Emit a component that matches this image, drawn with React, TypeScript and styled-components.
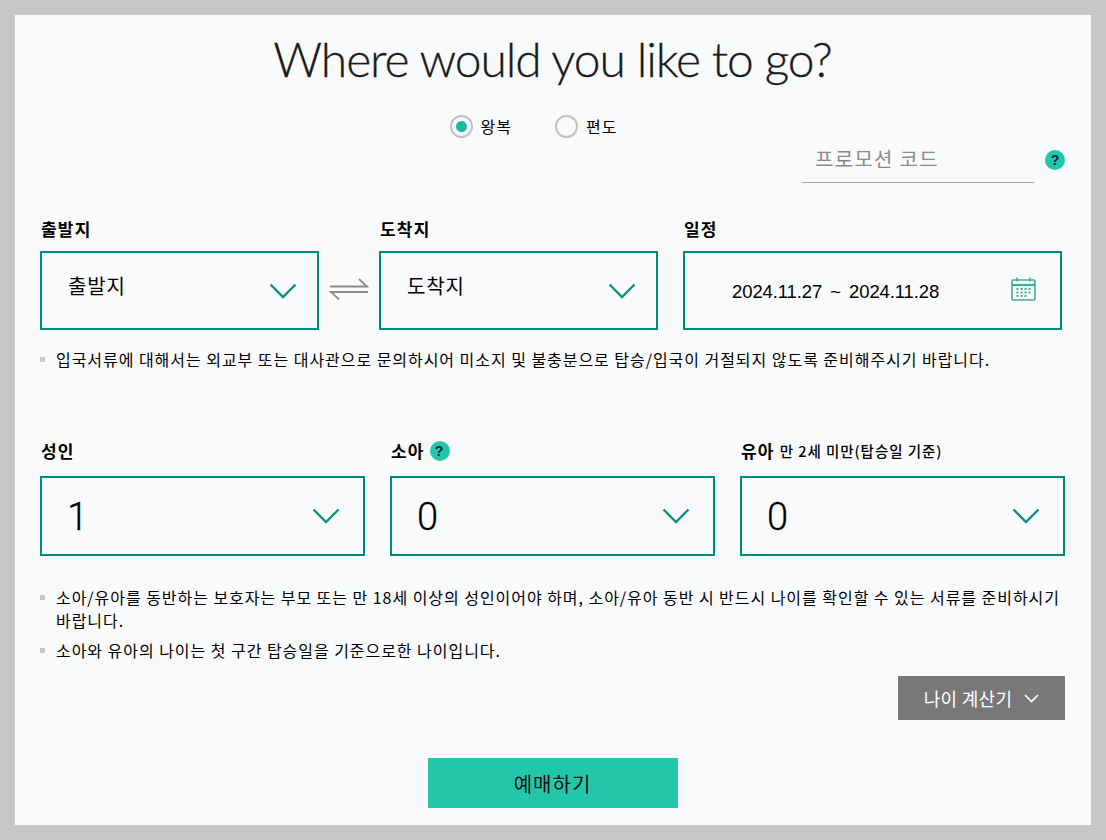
import React from "react";
import styled, { createGlobalStyle } from "styled-components";

const Global = createGlobalStyle`
  html, body { margin: 0; padding: 0; background: #c5c6c8; }
  body { font-family: "Noto Sans CJK KR", "Noto Sans", sans-serif; color: #000; }
  * { box-sizing: border-box; }
`;
const Page = styled.div`
  padding: 15px;
  width: 1106px;
  height: 840px;
`;
const Panel = styled.main`
  background: #f8fafc;
  height: 810px;
  padding: 0 26px 0 25px;
  display: flex;
  flex-direction: column;
`;
const Title = styled.h1`
  margin: 13px 0 0;
  height: 62px;
  font: 300 48px/62px Lato, sans-serif;
  letter-spacing: -1.1px;
  -webkit-text-stroke: 0.3px #1a1a1a;
  color: #1a1a1a;
  text-align: center;
`;
const RadioRow = styled.div`
  display: flex;
  justify-content: center;
  gap: 43px;
  margin-top: 24px;
  height: 24px;
  padding-right: 38px;
`;
const RadioLabel = styled.label`
  display: flex;
  align-items: center;
  gap: 8px;
  font-size: 16px;
  letter-spacing: 1px;
`;
const RadioMark = styled.span<{ $on?: boolean }>`
  width: 23px;
  height: 23px;
  border-radius: 50%;
  border: 2px solid #c2c2c2;
  display: flex;
  align-items: center;
  justify-content: center;
  &::after {
    content: "";
    width: 11px;
    height: 11px;
    border-radius: 50%;
    background: ${(p) => (p.$on ? "#1cb99b" : "transparent")};
  }
`;
const PromoRow = styled.div`
  display: flex;
  justify-content: flex-end;
  align-items: flex-start;
  gap: 11px;
  margin-top: 3px;
`;
const PromoField = styled.div`
  width: 232px;
  height: 42px;
  border-bottom: 1px solid #aaa;
  padding: 2px 0 0 13px;
  font-size: 20px;
  line-height: 32px;
  letter-spacing: 1.3px;
  color: #8a8a8a;
`;
const HelpBadge = styled.span<{ $small?: boolean }>`
  display: inline-flex;
  width: 20px;
  height: 20px;
  margin-top: ${(p) => (p.$small ? 1 : 9)}px;
  border-radius: 50%;
  background: #22c7a9;
  color: #123;
  font: 700 14px/20px "Liberation Sans", sans-serif;
  align-items: center;
  justify-content: center;
  flex: none;
`;
const RouteRow = styled.div`
  display: flex;
  align-items: flex-end;
  margin-top: 33px;
`;
const Field = styled.div<{ $w: number; $gap?: number }>`
  width: ${(p) => p.$w}px;
  margin-left: ${(p) => p.$gap ?? 0}px;
  flex: none;
  display: flex;
  flex-direction: column;
`;
const FieldLabel = styled.div`
  height: 25px;
  padding-left: 1px;
  font-size: 17px;
  font-weight: 700;
  letter-spacing: 1.2px;
  line-height: 24px;
  display: flex;
  align-items: center;
  gap: 5px;
  white-space: nowrap;
`;
const SubLabel = styled.span`
  font-size: 14.5px;
  font-weight: 500;
  letter-spacing: 0.95px;
`;
const SelectBox = styled.div<{ $h: number }>`
  height: ${(p) => p.$h}px;
  margin-top: ${(p) => (p.$h === 79 ? 10 : 13)}px;
  border: 2px solid #008c7a;
  display: flex;
  align-items: center;
  justify-content: space-between;
`;
const PlaceText = styled.span`
  padding-left: 26px;
  margin-top: -11px;
  font-size: 20px;
  letter-spacing: 0.9px;
`;
const CountText = styled.span`
  padding-left: 25px;
  font: 300 38px/44px Roboto, "Noto Sans", sans-serif;
  -webkit-text-stroke: 0.3px #000;
  margin-top: 2px;
`;
const DateText = styled.span`
  padding-left: 47px;
  margin-top: 3px;
  font: 400 18.5px/24px "Liberation Sans", sans-serif;
  letter-spacing: -0.1px;
  word-spacing: 3px;
`;
const Swap = styled.div`
  width: 60px;
  height: 79px;
  flex: none;
  display: flex;
  align-items: center;
  justify-content: center;
  padding-bottom: 4px;
`;
const Chevron = styled.svg<{ $end: number }>`
  margin-right: ${(p) => p.$end}px;
  flex: none;
`;
const CalIcon = styled.svg`
  margin: -3px 24px 0 0;
  flex: none;
`;
const Notes = styled.ul<{ $top: number }>`
  list-style: none;
  margin: ${(p) => p.$top}px 0 0;
  padding: 0;
  font-size: 16px;
  line-height: 23px;
`;
const Note = styled.li`
  position: relative;
  padding-left: 16px;
  margin-bottom: 7px;
  letter-spacing: 0.96px;
  &::before {
    content: "";
    position: absolute;
    left: 0;
    top: 9px;
    width: 5px;
    height: 5px;
    background: #c8c8c8;
  }
`;
const PaxRow = styled.div`
  display: flex;
  gap: 25px;
  margin-top: 60px;
`;
const CalcRow = styled.div`
  display: flex;
  justify-content: flex-end;
  margin-top: 7px;
`;
const CalcButton = styled.button`
  width: 167px;
  height: 44px;
  border: 0;
  background: #787878;
  color: #fff;
  font: 400 18px "Noto Sans CJK KR", sans-serif;
  letter-spacing: 0.3px;
  display: flex;
  align-items: center;
  justify-content: center;
  gap: 12px;
`;
const SubmitRow = styled.div`
  display: flex;
  justify-content: center;
  margin-top: 38px;
`;
const Submit = styled.button`
  width: 250px;
  height: 50px;
  border: 0;
  background: #22c7a9;
  color: #111;
  font: 400 20px "Noto Sans CJK KR", sans-serif;
  letter-spacing: 1px;
`;

const Down = ({ end = 20 }: { end?: number }) => (
  <Chevron $end={end} width={28} height={16} viewBox="0 0 28 16" fill="none">
    <path d="M1.5 1.5 14 14 26.5 1.5" stroke="#0f8f80" strokeWidth="2.4" />
  </Chevron>
);

export default function App() {
  return (
    <Page>
      <Global />
      <Panel>
        <Title>Where would you like to go?</Title>
        <RadioRow>
          <RadioLabel><RadioMark $on />왕복</RadioLabel>
          <RadioLabel><RadioMark />편도</RadioLabel>
        </RadioRow>
        <PromoRow>
          <PromoField>프로모션 코드</PromoField>
          <HelpBadge>?</HelpBadge>
        </PromoRow>
        <RouteRow>
          <Field $w={279}>
            <FieldLabel>출발지</FieldLabel>
            <SelectBox $h={79}><PlaceText>출발지</PlaceText><Down /></SelectBox>
          </Field>
          <Swap>
            <svg width="40" height="22" viewBox="0 0 40 22" fill="none" stroke="#8a8a8a" strokeWidth="1.8">
              <path d="M1 8.5h37L30 1" />
              <path d="M39 14H2l8 7.5" />
            </svg>
          </Swap>
          <Field $w={279}>
            <FieldLabel>도착지</FieldLabel>
            <SelectBox $h={79}><PlaceText>도착지</PlaceText><Down /></SelectBox>
          </Field>
          <Field $w={379} $gap={25}>
            <FieldLabel>일정</FieldLabel>
            <SelectBox $h={79}>
              <DateText>2024.11.27 ~ 2024.11.28</DateText>
              <CalIcon width="25" height="24" viewBox="0 0 25 24" fill="none" stroke="#48a999" strokeWidth="1.6">
                <rect x="1" y="3" width="23" height="20" rx="1.5" />
                <path d="M1 8h23" strokeWidth="2.2" />
                <path d="M6 0.5v4M19 0.5v4" />
                <path d="M5.5 12h2M9.5 12h2M13.5 12h2M17.5 12h2M5.5 15.5h2M9.5 15.5h2M13.5 15.5h2M17.5 15.5h2M5.5 19h2M9.5 19h2M13.5 19h2" strokeWidth="2" />
              </CalIcon>
            </SelectBox>
          </Field>
        </RouteRow>
        <Notes $top={18}>
          <Note>입국서류에 대해서는 외교부 또는 대사관으로 문의하시어 미소지 및 불충분으로 탑승/입국이 거절되지 않도록 준비해주시기 바랍니다.</Note>
        </Notes>
        <PaxRow>
          <Field $w={325}>
            <FieldLabel>성인</FieldLabel>
            <SelectBox $h={80}><CountText>1</CountText><Down end={23} /></SelectBox>
          </Field>
          <Field $w={325}>
            <FieldLabel>소아 <HelpBadge $small>?</HelpBadge></FieldLabel>
            <SelectBox $h={80}><CountText>0</CountText><Down end={23} /></SelectBox>
          </Field>
          <Field $w={325}>
            <FieldLabel>유아 <SubLabel>만 2세 미만(탑승일 기준)</SubLabel></FieldLabel>
            <SelectBox $h={80}><CountText>0</CountText><Down end={23} /></SelectBox>
          </Field>
        </PaxRow>
        <Notes $top={30}>
          <Note>소아/유아를 동반하는 보호자는 부모 또는 만 18세 이상의 성인이어야 하며, 소아/유아 동반 시 반드시 나이를 확인할 수 있는 서류를 준비하시기 바랍니다.</Note>
          <Note>소아와 유아의 나이는 첫 구간 탑승일을 기준으로한 나이입니다.</Note>
        </Notes>
        <CalcRow>
          <CalcButton>
            나이 계산기
            <svg width="15" height="9" viewBox="0 0 15 9" fill="none" stroke="#fff" strokeWidth="1.6"><path d="M1 1l6.5 6.5L14 1" /></svg>
          </CalcButton>
        </CalcRow>
        <SubmitRow><Submit>예매하기</Submit></SubmitRow>
      </Panel>
    </Page>
  );
}
